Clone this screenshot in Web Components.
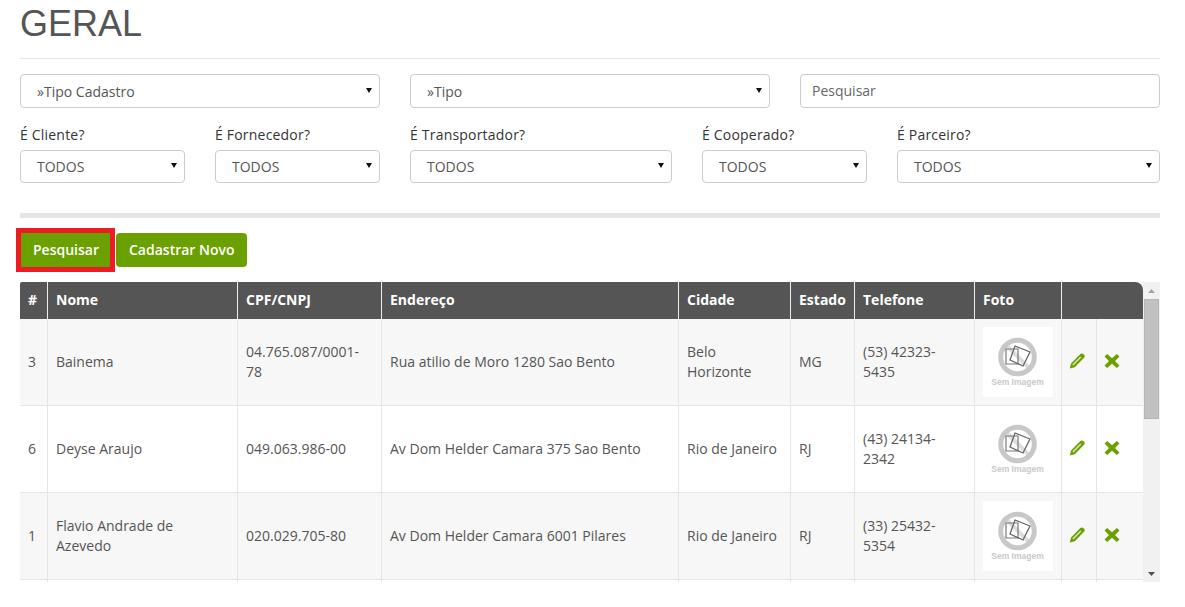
<!DOCTYPE html>
<html>
<head>
<meta charset="utf-8" />
<title>Geral</title>
<style>
body {
	color: #555;
	font-family: "Open Sans", sans-serif;
	font-size: 14px;
	margin: 0;
	overflow: hidden;
}
</style>
</head>

<body>
<template id="cad-page">
<style>
:host {
	box-sizing: border-box;
	display: block;
	height: 607px;
	padding: 0 25px 0 20px;
}
h1 {
	border-bottom: 1px solid #e5e5e5;
	color: #555;
	font: 400 36px/40px "Liberation Sans", Arial, sans-serif;
	height: 54px;
	margin: 0 0 15px;
	padding-top: 4px;
}
.row-1 {
	display: grid;
	gap: 30px;
	grid-template-columns: repeat(3, 1fr);
}
.row-2 {
	display: grid;
	gap: 30px;
	grid-template-columns: 165px 165px 262px 165px 1fr;
	margin-top: 17px;
}
hr {
	background: #e5e5e5;
	border: 0;
	height: 5px;
	margin: 30px 0 15px;
}
.actions {
	display: flex;
	gap: 6px;
	margin-bottom: 15px;
	padding-left: 1px;
}
</style>
<h1>GERAL</h1>
<div class="row-1">
	<filter-select value="»Tipo Cadastro"></filter-select>
	<filter-select value="»Tipo"></filter-select>
	<search-box placeholder="Pesquisar"></search-box>
</div>
<div class="row-2">
	<filter-select label="É Cliente?" value="TODOS"></filter-select>
	<filter-select label="É Fornecedor?" value="TODOS"></filter-select>
	<filter-select label="É Transportador?" value="TODOS"></filter-select>
	<filter-select label="É Cooperado?" value="TODOS"></filter-select>
	<filter-select label="É Parceiro?" value="TODOS"></filter-select>
</div>
<hr />
<div class="actions">
	<action-button marked>Pesquisar</action-button>
	<action-button>Cadastrar Novo</action-button>
</div>
<cad-grid></cad-grid>
</template>

<template id="filter-select">
<style>
:host {
	display: block;
}
label {
	color: #333;
	display: block;
	letter-spacing: .2px;
	line-height: 20px;
	margin-bottom: 5px;
}
label:empty {
	display: none;
}
.box {
	align-items: center;
	background: #fff;
	border: 1px solid #ccc;
	border-radius: 4px;
	box-sizing: border-box;
	color: #555;
	display: flex;
	height: 34px;
	justify-content: space-between;
	padding: 0 7px 0 16px;
}
:host([label]) .box {
	height: 33px;
}
svg {
	display: block;
	fill: #111;
	height: 5px;
	margin-top: -2px;
	width: 6px;
}
</style>
<label></label>
<div class="box" role="combobox">
	<span class="value"></span>
	<svg viewBox="0 0 6 5" role="presentation"><path d="M0 0H6L3 5Z" /></svg>
</div>
</template>

<template id="search-box">
<style>
:host {
	display: block;
}
input {
	border: 1px solid #ccc;
	border-radius: 4px;
	box-sizing: border-box;
	color: #555;
	display: block;
	font: inherit;
	height: 34px;
	padding: 0 11px 2px;
	width: 100%;
}
input::placeholder {
	color: #666;
	opacity: 1;
}
</style>
<input type="text" />
</template>

<template id="action-button">
<style>
:host {
	display: block;
}
button {
	background: #6aa100;
	border: 0;
	border-radius: 4px;
	color: #fff;
	display: block;
	font: 600 14px/34px "Open Sans", sans-serif;
	height: 34px;
	padding: 0 12.5px 0 13px;
}
:host([marked]) button {
	border-radius: 0;
	outline: 5px solid #ed1c24;
	padding: 0 12px;
	width: 89px;
}
</style>
<button type="button"><slot></slot></button>
</template>

<template id="cad-grid">
<style>
:host {
	display: flex;
	height: 300px;
	overflow: hidden;
}
.clip {
	flex: 1;
	overflow: hidden;
}
table {
	border-collapse: separate;
	border-spacing: 0;
	table-layout: fixed;
	width: 1123px;
}
th {
	background: #555;
	border-left: 1px solid #eee;
	box-sizing: border-box;
	color: #fff;
	font-weight: 700;
	height: 37px;
	padding: 0 8px 2px;
	text-align: left;
}
th:first-child {
	border-left: 0;
	border-top-left-radius: 2px;
}
th:last-child {
	border-top-right-radius: 8px;
}
td {
	border-bottom: 1px solid #e5e5e5;
	border-left: 1px solid #e5e5e5;
	box-sizing: border-box;
	height: 87px;
	line-height: 20px;
	padding: 0 8px;
	vertical-align: middle;
}
td:first-child {
	border-left: 0;
}
tbody tr:nth-child(odd) td {
	background: #f7f7f7;
}
td.icon {
	padding: 0 0 0 7px;
}
td.icon svg {
	display: block;
	height: 16px;
	margin-bottom: 2px;
	width: 16px;
}
.bar {
	background: #f1f1f1;
	display: flex;
	flex: 0 0 17px;
	flex-direction: column;
	height: 300px;
}
.arrow {
	align-items: center;
	display: flex;
	flex: 0 0 17px;
	justify-content: center;
}
.arrow svg {
	height: 4px;
	width: 7px;
}
.thumb {
	background: #c1c1c1;
	border: 1px solid #b5b5b5;
	box-sizing: border-box;
	flex: 0 0 120px;
	margin: 0 1px;
}
.fill {
	flex: 1;
}
</style>
<div class="clip">
<table>
	<colgroup>
		<col style="width:27px" /><col style="width:190px" /><col style="width:144px" /><col style="width:297px" />
		<col style="width:112px" /><col style="width:64px" /><col style="width:120px" /><col style="width:87px" />
		<col style="width:35px" /><col style="width:47px" />
	</colgroup>
	<thead>
		<tr><th>#</th><th>Nome</th><th>CPF/CNPJ</th><th>Endereço</th><th>Cidade</th><th>Estado</th><th>Telefone</th><th>Foto</th><th colspan="2"></th></tr>
	</thead>
	<tbody></tbody>
</table>
</div>
<div class="bar">
	<div class="arrow"><svg viewBox="0 0 7 4" role="presentation"><path d="M3.5 0L7 4H0Z" fill="#a3a3a3" /></svg></div>
	<div class="thumb"></div>
	<div class="fill"></div>
	<div class="arrow"><svg viewBox="0 0 7 4" role="presentation"><path d="M0 0H7L3.5 4Z" fill="#505050" /></svg></div>
</div>
</template>

<template id="no-photo">
<style>
:host {
	background: #fff;
	display: block;
	height: 70px;
	width: 70px;
}
svg {
	display: block;
}
text {
	fill: #c9c9c9;
	font: 700 8.5px "Liberation Sans", Arial, sans-serif;
}
</style>
<svg width="70" height="70" viewBox="0 0 70 70" role="img">
	<path d="M22 17L48 43" stroke="#ddd" stroke-width="4" />
	<circle cx="34.5" cy="30" r="16.8" fill="none" stroke="#c8c8c8" stroke-width="5" />
	<path d="M23 22H35V37H23Z" fill="none" stroke="#777" stroke-width="1.2" />
	<path d="M32 19L47 25L40 39L27 33Z" fill="none" stroke="#666" stroke-width="1.3" />
	<text x="34.5" y="58" text-anchor="middle">Sem Imagem</text>
</svg>
</template>

<script>
const ROWS = [
	['3', 'Bainema', '04.765.087/0001-78', 'Rua atilio de Moro 1280 Sao Bento', 'Belo Horizonte', 'MG', '(53) 42323-5435'],
	['6', 'Deyse Araujo', '049.063.986-00', 'Av Dom Helder Camara 375 Sao Bento', 'Rio de Janeiro', 'RJ', '(43) 24134-2342'],
	['1', 'Flavio Andrade de Azevedo', '020.029.705-80', 'Av Dom Helder Camara 6001 Pilares', 'Rio de Janeiro', 'RJ', '(33) 25432-5354']
];

const PENCIL = '<svg viewBox="0 0 16 16" role="img" aria-label="Editar"><path d="M.8 15.6L2 10.4L11.4 1C12.3.1 13.5.2 14.5 1.2L14.9 1.6C15.9 2.6 16 3.8 15 4.7L5.8 14.3Z" fill="#6aa100" /><path d="M3.4 11.6L11.4 3.6L12.3 4.5L4.3 12.5Z" fill="#dfe8c0" /></svg>';
const CROSS = '<svg viewBox="0 0 16 16" role="img" aria-label="Excluir"><path d="M3.2 1L8 5.2L12.8 1L15.5 3.6L11 8L15.5 12.4L12.8 15L8 10.8L3.2 15L.5 12.4L5 8L.5 3.6Z" fill="#6aa100" /></svg>';

function shadowFrom(host, id) {
	host.attachShadow({ mode: 'open' }).appendChild(document.querySelector('#' + id).content.cloneNode(true));
	return host.shadowRoot;
}

window.customElements.define('cad-page', class extends HTMLElement {
	constructor() {
		super();
		shadowFrom(this, 'cad-page');
	}
});

window.customElements.define('filter-select', class extends HTMLElement {
	constructor() {
		super();
		shadowFrom(this, 'filter-select');
	}

	connectedCallback() {
		this.shadowRoot.querySelector('label').textContent = this.getAttribute('label') || '';
		this.shadowRoot.querySelector('.value').textContent = this.getAttribute('value') || '';
	}
});

window.customElements.define('search-box', class extends HTMLElement {
	constructor() {
		super();
		shadowFrom(this, 'search-box');
	}

	connectedCallback() {
		this.shadowRoot.querySelector('input').placeholder = this.getAttribute('placeholder') || '';
	}
});

window.customElements.define('action-button', class extends HTMLElement {
	constructor() {
		super();
		shadowFrom(this, 'action-button');
	}
});

window.customElements.define('no-photo', class extends HTMLElement {
	constructor() {
		super();
		shadowFrom(this, 'no-photo');
	}
});

window.customElements.define('cad-grid', class extends HTMLElement {
	constructor() {
		super();
		shadowFrom(this, 'cad-grid');
	}

	connectedCallback() {
		const body = this.shadowRoot.querySelector('tbody');
		// the row after the last one only shows its first 2px under the clip
		body.innerHTML = ROWS.map(row =>
			'<tr>' + row.map(cell => '<td>' + cell + '</td>').join('') +
			'<td><no-photo></no-photo></td>' +
			'<td class="icon">' + PENCIL + '</td>' +
			'<td class="icon">' + CROSS + '</td></tr>'
		).join('') + '<tr>' + '<td></td>'.repeat(10) + '</tr>';
	}
});
</script>

<cad-page></cad-page>
</body>
</html>
